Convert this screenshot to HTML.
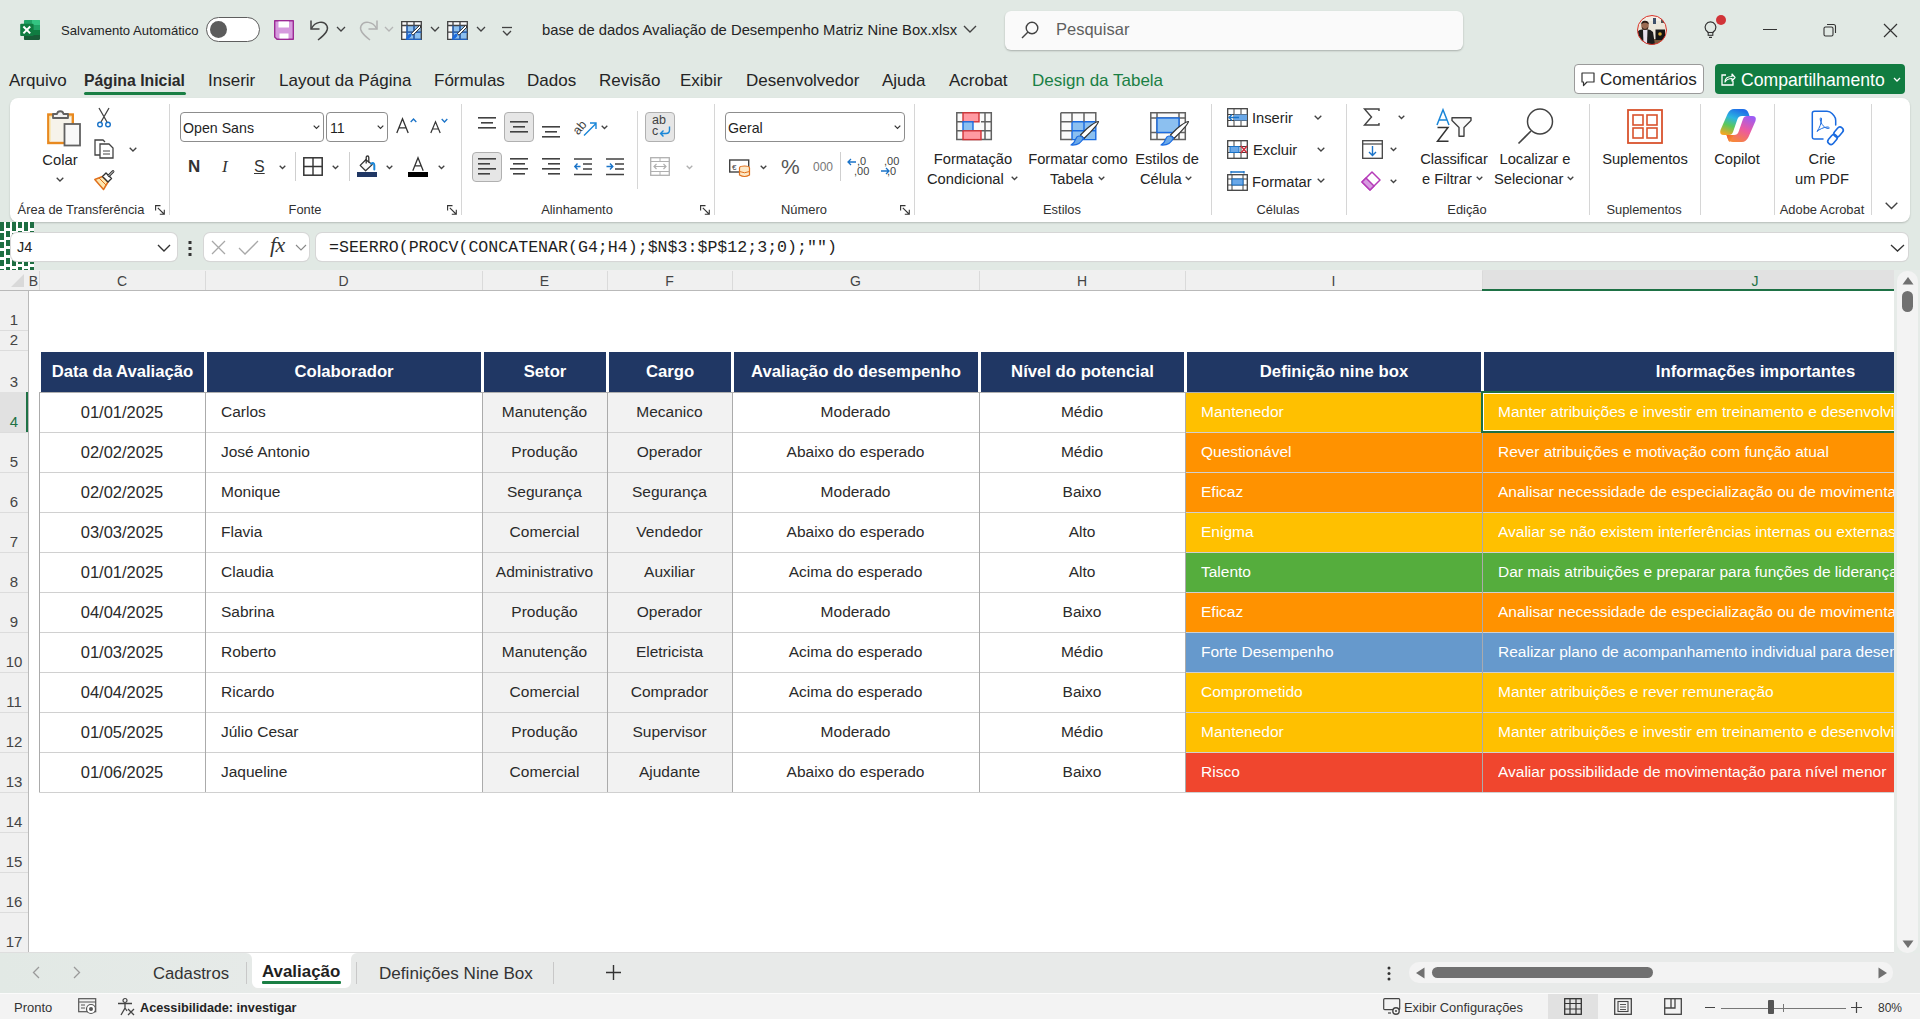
<!DOCTYPE html>
<html><head><meta charset="utf-8"><style>
html,body{margin:0;padding:0}
body{width:1920px;height:1019px;overflow:hidden;position:relative;background:#e1e9e4;font-family:"Liberation Sans",sans-serif;color:#242424}
.a{position:absolute;white-space:nowrap}
svg{position:absolute;overflow:visible}
.menu{position:absolute;white-space:nowrap;font-size:17px;top:71px;color:#242424}
.rib{position:absolute;left:10px;top:98px;width:1900px;height:124px;background:#fff;border-radius:8px;box-shadow:0 1px 2px rgba(0,0,0,.2)}
.sep{position:absolute;width:1px;background:#d4d4d4}
.gl{position:absolute;white-space:nowrap;font-size:13.5px;top:202px;color:#303030}
.rt{position:absolute;white-space:nowrap;font-size:15px;color:#242424}
.combo{position:absolute;background:#fff;border:1px solid #8d8d8d;border-radius:4px;box-sizing:border-box}
.sel{position:absolute;background:#e6e6e6;border:1px solid #b0b0b0;border-radius:4px;box-sizing:border-box}
.ch{position:absolute;white-space:nowrap;font-size:14px;color:#444;text-align:center;top:273px;line-height:16px}
.rh{position:absolute;white-space:nowrap;font-size:15px;color:#444;text-align:center;left:0;width:28px}
.c{position:absolute;white-space:nowrap;overflow:hidden;font-size:15.5px;line-height:40px;color:#2a2a2a;box-sizing:border-box}
.hd{position:absolute;white-space:nowrap;overflow:hidden;font-size:16.7px;font-weight:bold;line-height:40px;color:#fff;text-align:center;background:#203764;top:352px;height:40px}
</style></head><body>

<!-- excel icon -->
<svg style="left:20px;top:20px" width="20" height="20" viewBox="0 0 20 20">
 <defs><clipPath id="xlc"><rect x="3.8" y="0" width="16.2" height="20" rx="1.2"/></clipPath></defs>
 <g clip-path="url(#xlc)">
 <rect x="3.8" y="0" width="16.2" height="5" fill="#21a366"/>
 <rect x="12" y="0" width="8" height="5" fill="#33c481"/>
 <rect x="3.8" y="5" width="16.2" height="5" fill="#21a366"/>
 <rect x="3.8" y="10" width="16.2" height="5" fill="#107c41"/>
 <rect x="3.8" y="15" width="16.2" height="5" fill="#185c37"/>
 </g>
 <rect x="0.2" y="3.8" width="13.4" height="12.2" rx="1" fill="#107c41"/>
 <path d="M3.4 6.5 L10.2 13.4 M10.2 6.5 L3.4 13.4" stroke="#fff" stroke-width="2"/>
</svg>
<div class="a" style="left:61px;top:23px;font-size:13.1px;color:#242424">Salvamento Automático</div>
<div class="a" style="left:206px;top:17px;width:54px;height:25px;box-sizing:border-box;border:1px solid #5e5e5e;border-radius:13px;background:#fff"></div>
<div class="a" style="left:210px;top:21px;width:17px;height:17px;border-radius:50%;background:#5c5c5c"></div>
<!-- save -->
<svg style="left:274px;top:20px" width="20" height="20" viewBox="0 0 20 20">
 <path d="M0.7 0.7 H19.3 V19.3 H3 L0.7 17 Z" fill="#d69ade" stroke="#9c2a94" stroke-width="1.4" stroke-linejoin="round"/>
 <rect x="4.5" y="1.5" width="10.5" height="6" fill="#fff"/>
 <rect x="5.5" y="13.5" width="9" height="5" fill="#fff"/>
</svg>
<!-- undo -->
<svg style="left:309px;top:20px" width="22" height="21" viewBox="0 0 22 21">
 <path d="M2 0.5 V9 H10.5" fill="none" stroke="#424242" stroke-width="1.5"/>
 <path d="M2.5 8.5 C6 1.5 15 0 18 6 C20 10 17 14 9 20" fill="none" stroke="#424242" stroke-width="1.5"/>
</svg>
<svg style="left:336px;top:26px" width="10" height="6"><path d="M1 1 L5 5 L9 1" fill="none" stroke="#424242" stroke-width="1.3"/></svg>
<!-- redo -->
<svg style="left:357px;top:20px" width="22" height="21" viewBox="0 0 22 21">
 <path d="M20 0.5 V9 H11.5" fill="none" stroke="#b0b0b0" stroke-width="1.5"/>
 <path d="M19.5 8.5 C16 1.5 7 0 4 6 C2 10 5 14 13 20" fill="none" stroke="#b0b0b0" stroke-width="1.5"/>
</svg>
<svg style="left:384px;top:26px" width="10" height="6"><path d="M1 1 L5 5 L9 1" fill="none" stroke="#b5b5b5" stroke-width="1.3"/></svg>
<svg style="left:401px;top:21px" width="22" height="20" viewBox="0 0 22 20">
 <rect x="0.7" y="0.7" width="19.6" height="17.6" fill="#fafafa"/>
 <rect x="6" y="4.5" width="14.3" height="13.8" fill="#8cc0f0"/>
 <path d="M0.7 0.7 H20.3 V18.3 H0.7 Z M6 0.7 V18.3 M13 0.7 V18.3 M0.7 4.5 H20.3 M0.7 11.2 H20.3" fill="none" stroke="#424242" stroke-width="1.3"/>
 <path d="M6 4.5 V18.3 H20.3 M13 4.5 V18.3 M6 11.2 H20.3" fill="none" stroke="#1a6be0" stroke-width="1"/>
 <path d="M20 6 L12 14.2 L10.3 12.5 L18.5 4.5 Z" fill="#fff" stroke="#333" stroke-width="1"/>
 <path d="M10.8 13.6 C10 16.5 7.8 18.5 4.2 19 C5.5 17.5 6 15.5 7.5 13.6 C8.5 12.4 10.2 12.6 10.8 13.6 Z" fill="#1a6be0"/>
</svg>
<svg style="left:430px;top:26px" width="10" height="6"><path d="M1 1 L5 5 L9 1" fill="none" stroke="#424242" stroke-width="1.3"/></svg><svg style="left:447px;top:21px" width="22" height="20" viewBox="0 0 22 20">
 <rect x="0.7" y="0.7" width="19.6" height="17.6" fill="#fafafa"/>
 <rect x="6" y="4.5" width="14.3" height="13.8" fill="#8cc0f0"/>
 <path d="M0.7 0.7 H20.3 V18.3 H0.7 Z M6 0.7 V18.3 M13 0.7 V18.3 M0.7 4.5 H20.3 M0.7 11.2 H20.3" fill="none" stroke="#424242" stroke-width="1.3"/>
 <path d="M6 4.5 V18.3 H20.3 M13 4.5 V18.3 M6 11.2 H20.3" fill="none" stroke="#1a6be0" stroke-width="1"/>
 <path d="M20 6 L12 14.2 L10.3 12.5 L18.5 4.5 Z" fill="#fff" stroke="#333" stroke-width="1"/>
 <path d="M10.8 13.6 C10 16.5 7.8 18.5 4.2 19 C5.5 17.5 6 15.5 7.5 13.6 C8.5 12.4 10.2 12.6 10.8 13.6 Z" fill="#1a6be0"/>
</svg>
<svg style="left:476px;top:26px" width="10" height="6"><path d="M1 1 L5 5 L9 1" fill="none" stroke="#424242" stroke-width="1.3"/></svg>
<svg style="left:501px;top:26px" width="12" height="12" viewBox="0 0 12 12"><path d="M1 1.5 H11" stroke="#424242" stroke-width="1.3"/><path d="M2 5 L6 9 L10 5" fill="none" stroke="#424242" stroke-width="1.3"/></svg>
<div class="a" style="left:542px;top:22px;font-size:14.8px;color:#242424">base de dados Avaliação de Desempenho Matriz Nine Box.xlsx</div>
<svg style="left:963px;top:25px" width="14" height="8"><path d="M1 1 L7 7 L13 1" fill="none" stroke="#424242" stroke-width="1.4"/></svg>
<!-- search -->
<div class="a" style="left:1005px;top:11px;width:458px;height:39px;box-sizing:border-box;background:#fafafa;border-radius:6px;box-shadow:0 1px 2px rgba(0,0,0,.25)"></div>
<svg style="left:1021px;top:21px" width="18" height="18" viewBox="0 0 18 18"><circle cx="11" cy="7" r="5.8" fill="none" stroke="#424242" stroke-width="1.4"/><path d="M7 11 L1 17" stroke="#424242" stroke-width="1.5"/></svg>
<div class="a" style="left:1056px;top:20px;font-size:16.5px;color:#5f5f5f">Pesquisar</div>
<!-- avatar -->
<svg style="left:1637px;top:15px" width="30" height="30" viewBox="0 0 30 30">
 <defs><clipPath id="avc"><circle cx="15" cy="15" r="14.5"/></clipPath></defs>
 <g clip-path="url(#avc)">
  <rect width="30" height="30" fill="#ece6da"/>
  <rect x="0" y="0" width="30" height="6" fill="#f4efe6"/>
  <rect x="16" y="3" width="3" height="6" fill="#40506a"/>
  <rect x="24" y="3" width="3" height="5" fill="#555"/>
  <rect x="0" y="24" width="30" height="6" fill="#7a5a3e"/>
  <path d="M0 17 Q3 13.5 8 14.5 Q13 13.5 16 17 L18 30 H0 Z" fill="#1c1c1c"/>
  <path d="M6 15 L8.5 14.5 L10.5 15 L10 29 H6.5 Z" fill="#e6e0ec"/>
  <ellipse cx="8" cy="10.8" rx="3.8" ry="4.2" fill="#9a6a50"/>
  <path d="M4.2 9.5 Q4.5 5.5 8 5.8 Q11.8 5.8 11.8 9.5 Q10 7.5 8 7.8 Q6 7.5 4.2 9.5 Z" fill="#2a1c16"/>
  <path d="M5 12 Q8 16 11 12 L11 13.5 Q8 16.5 5 13.5 Z" fill="#3a2a22"/>
  <rect x="18.5" y="14.5" width="9.5" height="10.5" fill="#151515"/>
  <circle cx="23" cy="19" r="1.8" fill="#d4a83a"/>
 </g>
 <circle cx="15" cy="15" r="14.5" fill="none" stroke="#d9342b" stroke-width="1"/>
</svg>
<!-- lightbulb -->
<svg style="left:1703px;top:21px" width="16" height="18" viewBox="0 0 16 18"><path d="M5.2 11.5 L2.7 8.8 A5.4 5.4 0 1 1 12.3 8.8 L9.8 11.5 Z" fill="none" stroke="#333" stroke-width="1.2" stroke-linejoin="round"/><rect x="5.2" y="11.5" width="4.6" height="2.8" fill="none" stroke="#333" stroke-width="1.1"/><path d="M6 16.4 H9" stroke="#333" stroke-width="1.2"/></svg>
<div class="a" style="left:1716px;top:15px;width:10px;height:10px;border-radius:50%;background:#d13438"></div>
<!-- window controls -->
<div class="a" style="left:1763px;top:29px;width:14px;height:1px;background:#333"></div>
<svg style="left:1823px;top:23px" width="14" height="14" viewBox="0 0 14 14"><rect x="1" y="4" width="9" height="9" rx="1.5" fill="none" stroke="#333" stroke-width="1.1"/><path d="M4 1.5 H10.5 Q12.5 1.5 12.5 3.5 V10" fill="none" stroke="#333" stroke-width="1.1"/></svg>
<svg style="left:1883px;top:23px" width="15" height="15" viewBox="0 0 15 15"><path d="M1 1 L14 14 M14 1 L1 14" stroke="#333" stroke-width="1.2"/></svg>
<!-- MENU -->
<div class="menu" style="left:9px">Arquivo</div>
<div class="menu" style="left:84px;font-weight:bold;font-size:15.8px;top:72px;color:#2a2a2a">Página Inicial</div>
<div class="a" style="left:84px;top:92px;width:102px;height:3px;border-radius:2px;background:#1a7f44"></div>
<div class="menu" style="left:208px">Inserir</div>
<div class="menu" style="left:279px">Layout da Página</div>
<div class="menu" style="left:434px">Fórmulas</div>
<div class="menu" style="left:527px">Dados</div>
<div class="menu" style="left:599px">Revisão</div>
<div class="menu" style="left:680px">Exibir</div>
<div class="menu" style="left:746px">Desenvolvedor</div>
<div class="menu" style="left:882px">Ajuda</div>
<div class="menu" style="left:949px">Acrobat</div>
<div class="menu" style="left:1032px;color:#1a7f44">Design da Tabela</div>
<div class="a" style="left:1574px;top:64px;width:130px;height:30px;box-sizing:border-box;border:1px solid #9a9a9a;border-radius:4px;background:#fff"></div>
<svg style="left:1581px;top:72px" width="14" height="15" viewBox="0 0 14 15"><path d="M1 1 H13 V10 H6 L2.5 13.5 V10 H1 Z" fill="none" stroke="#333" stroke-width="1.2" stroke-linejoin="round"/></svg>
<div class="a" style="left:1600px;top:70px;font-size:17.1px;color:#242424">Comentários</div>
<div class="a" style="left:1715px;top:64px;width:190px;height:30px;border-radius:4px;background:#117c41"></div>
<svg style="left:1720px;top:71px" width="16" height="16" viewBox="0 0 16 16"><path d="M6 4 H2 V14 H13 V10" fill="none" stroke="#fff" stroke-width="1.3"/><path d="M5 11 C5 7 8 5.5 12 5.5 V3 L15 6.5 L12 10 V7.5 C9 7.5 6.5 8.5 5 11 Z" fill="none" stroke="#fff" stroke-width="1.2" stroke-linejoin="round"/></svg>
<div class="a" style="left:1741px;top:70px;font-size:17.6px;color:#fff">Compartilhamento</div>
<svg style="left:1893px;top:77px" width="8" height="5"><path d="M1 1 L4 4 L7 1" fill="none" stroke="#fff" stroke-width="1.3"/></svg>

<div class="rib"></div>
<div class="a" style="left:169px;top:104px;width:1px;height:111px;background:#d6d6d6"></div>
<div class="a" style="left:461px;top:104px;width:1px;height:111px;background:#d6d6d6"></div>
<div class="a" style="left:714px;top:104px;width:1px;height:111px;background:#d6d6d6"></div>
<div class="a" style="left:914px;top:104px;width:1px;height:111px;background:#d6d6d6"></div>
<div class="a" style="left:1211px;top:104px;width:1px;height:111px;background:#d6d6d6"></div>
<div class="a" style="left:1346px;top:104px;width:1px;height:111px;background:#d6d6d6"></div>
<div class="a" style="left:1589px;top:104px;width:1px;height:111px;background:#d6d6d6"></div>
<div class="a" style="left:1700px;top:104px;width:1px;height:111px;background:#d6d6d6"></div>
<div class="a" style="left:1774px;top:104px;width:1px;height:111px;background:#d6d6d6"></div>
<div class="a" style="left:1871px;top:104px;width:1px;height:111px;background:#d6d6d6"></div>
<div class="a" style="left:-19px;width:200px;text-align:center;top:201.8px;font-size:12.9px;line-height:15.5px;color:#303030">Área de Transferência</div>
<div class="a" style="left:205px;width:200px;text-align:center;top:201.8px;font-size:12.9px;line-height:15.5px;color:#303030">Fonte</div>
<div class="a" style="left:477px;width:200px;text-align:center;top:201.8px;font-size:12.9px;line-height:15.5px;color:#303030">Alinhamento</div>
<div class="a" style="left:704px;width:200px;text-align:center;top:201.8px;font-size:12.9px;line-height:15.5px;color:#303030">Número</div>
<div class="a" style="left:962px;width:200px;text-align:center;top:201.8px;font-size:12.9px;line-height:15.5px;color:#303030">Estilos</div>
<div class="a" style="left:1178px;width:200px;text-align:center;top:201.8px;font-size:12.9px;line-height:15.5px;color:#303030">Células</div>
<div class="a" style="left:1367px;width:200px;text-align:center;top:201.8px;font-size:12.9px;line-height:15.5px;color:#303030">Edição</div>
<div class="a" style="left:1544px;width:200px;text-align:center;top:201.8px;font-size:12.9px;line-height:15.5px;color:#303030">Suplementos</div>
<div class="a" style="left:1722px;width:200px;text-align:center;top:201.8px;font-size:12.9px;line-height:15.5px;color:#303030">Adobe Acrobat</div>
<svg style="left:155px;top:205px" width="10" height="10" viewBox="0 0 10 10"><path d="M0.6 5.5 V0.6 H5.5" fill="none" stroke="#333" stroke-width="1.1"/><path d="M2.8 2.8 L9 9 M9.3 4.8 V9.3 H4.8" fill="none" stroke="#333" stroke-width="1.1"/></svg>
<svg style="left:447px;top:205px" width="10" height="10" viewBox="0 0 10 10"><path d="M0.6 5.5 V0.6 H5.5" fill="none" stroke="#333" stroke-width="1.1"/><path d="M2.8 2.8 L9 9 M9.3 4.8 V9.3 H4.8" fill="none" stroke="#333" stroke-width="1.1"/></svg>
<svg style="left:700px;top:205px" width="10" height="10" viewBox="0 0 10 10"><path d="M0.6 5.5 V0.6 H5.5" fill="none" stroke="#333" stroke-width="1.1"/><path d="M2.8 2.8 L9 9 M9.3 4.8 V9.3 H4.8" fill="none" stroke="#333" stroke-width="1.1"/></svg>
<svg style="left:900px;top:205px" width="10" height="10" viewBox="0 0 10 10"><path d="M0.6 5.5 V0.6 H5.5" fill="none" stroke="#333" stroke-width="1.1"/><path d="M2.8 2.8 L9 9 M9.3 4.8 V9.3 H4.8" fill="none" stroke="#333" stroke-width="1.1"/></svg>
<svg style="left:46px;top:107px" width="36" height="40" viewBox="0 0 36 40">
 <rect x="2.3" y="7.5" width="24.5" height="28.5" fill="#f6f3ea" stroke="#e8891f" stroke-width="2.4"/>
 <path d="M4 34 V9.5 H25" fill="none" stroke="#fbe3a0" stroke-width="1.2"/>
 <path d="M7 11 V7 H11 A3.3 3.3 0 0 1 17.5 7 H22 V11 Z" fill="#f2f2f2" stroke="#616161" stroke-width="1.8" stroke-linejoin="round"/>
 <rect x="18.5" y="17" width="15.5" height="21.5" fill="#f8f8f8" stroke="#616161" stroke-width="1.8"/>
</svg>
<div class="a" style="left:-40px;width:200px;text-align:center;top:152.1px;font-size:14.8px;line-height:17.8px;color:#242424">Colar</div>
<svg style="left:56px;top:177.0px" width="8" height="5.0"><path d="M0.7 0.7 L4.0 4.0 L7.3 0.7" fill="none" stroke="#424242" stroke-width="1.3"/></svg>
<svg style="left:96px;top:107px" width="16" height="21" viewBox="0 0 16 21"><path d="M3 1 L11 15 M13 1 L5 15" stroke="#424242" stroke-width="1.3"/><circle cx="4" cy="17.5" r="2.3" fill="#fff" stroke="#1a73c8" stroke-width="1.4"/><circle cx="12" cy="17.5" r="2.3" fill="#fff" stroke="#1a73c8" stroke-width="1.4"/></svg>
<svg style="left:94px;top:139px" width="21" height="20" viewBox="0 0 21 20"><path d="M6 16 H1 V1 H9 L11 3" fill="none" stroke="#424242" stroke-width="1.3"/><path d="M6 5 H15 L19 9 V19 H6 Z" fill="#fff" stroke="#424242" stroke-width="1.3"/><path d="M9 12 H16 M9 15 H16" stroke="#424242" stroke-width="1"/></svg>
<svg style="left:129px;top:147.0px" width="8" height="5.0"><path d="M0.7 0.7 L4.0 4.0 L7.3 0.7" fill="none" stroke="#424242" stroke-width="1.3"/></svg>
<svg style="left:94px;top:170px" width="21" height="21" viewBox="0 0 21 21"><path d="M0.8 9.5 L8.5 6.5 L14 12 L9.5 19.5 Z" fill="#fde6b0" stroke="#e0701c" stroke-width="1.5" stroke-linejoin="round"/><path d="M5 8 L12 15" stroke="#e0701c" stroke-width="1"/><path d="M8.5 6.5 L12 3 L17.5 8.5 L14 12 Z" fill="#fff" stroke="#333" stroke-width="1.4" stroke-linejoin="round"/><path d="M15 5.5 L19 1.5" stroke="#333" stroke-width="2.8" stroke-linecap="round"/><path d="M15 5.5 L19 1.5" stroke="#fff" stroke-width="0.9" stroke-linecap="round"/></svg>
<div class="combo" style="left:180px;top:112px;width:144px;height:30px"></div>
<div class="a" style="left:183px;top:119.5px;font-size:14.2px;line-height:17.0px;color:#1f1f1f;">Open Sans</div>
<svg style="left:313px;top:125.25px" width="7" height="4.5"><path d="M0.7 0.7 L3.5 3.5 L6.3 0.7" fill="none" stroke="#333" stroke-width="1.2"/></svg>
<div class="combo" style="left:326px;top:112px;width:62px;height:30px"></div>
<div class="a" style="left:330px;top:119.5px;font-size:14.2px;line-height:17.0px;color:#1f1f1f;">11</div>
<svg style="left:377px;top:125.25px" width="7" height="4.5"><path d="M0.7 0.7 L3.5 3.5 L6.3 0.7" fill="none" stroke="#333" stroke-width="1.2"/></svg>
<svg style="left:396px;top:118px" width="14" height="16" viewBox="0 0 14 16"><path d="M0.8 15 L6.5 0.8 L12.2 15 M3 9.8 H10" fill="none" stroke="#333" stroke-width="1.3"/></svg>
<svg style="left:410px;top:118px" width="7" height="5"><path d="M0.7 4 L3.5 1 L6.3 4" fill="none" stroke="#1a73c8" stroke-width="1.3"/></svg>
<svg style="left:430px;top:121px" width="12" height="13" viewBox="0 0 12 13"><path d="M0.8 12 L5.5 0.8 L10.2 12 M2.6 8 H8.4" fill="none" stroke="#333" stroke-width="1.2"/></svg>
<svg style="left:441px;top:118px" width="7" height="5"><path d="M0.7 1 L3.5 4 L6.3 1" fill="none" stroke="#1a73c8" stroke-width="1.3"/></svg>
<div class="a" style="left:188px;top:157px;font-size:17px;line-height:20px;font-weight:bold;color:#333">N</div>
<div class="a" style="left:222px;top:157px;font-size:17px;line-height:20px;font-style:italic;font-family:'Liberation Serif';color:#333">I</div>
<div class="a" style="left:254px;top:157px;font-size:16px;line-height:20px;color:#333;text-decoration:underline">S</div>
<svg style="left:279px;top:165.25px" width="7" height="4.5"><path d="M0.7 0.7 L3.5 3.5 L6.3 0.7" fill="none" stroke="#424242" stroke-width="1.3"/></svg>
<div class="a" style="left:295px;top:152px;width:1px;height:29px;background:#cfcfcf"></div>
<svg style="left:303px;top:157px" width="20" height="19" viewBox="0 0 20 19"><rect x="0.8" y="0.8" width="18.4" height="17.4" fill="none" stroke="#333" stroke-width="1.5"/><path d="M10 1 V18 M1 9.5 H19" stroke="#333" stroke-width="1.4"/></svg>
<svg style="left:332px;top:165.25px" width="7" height="4.5"><path d="M0.7 0.7 L3.5 3.5 L6.3 0.7" fill="none" stroke="#424242" stroke-width="1.3"/></svg>
<div class="a" style="left:349px;top:152px;width:1px;height:29px;background:#cfcfcf"></div>
<svg style="left:357px;top:155px" width="21" height="23" viewBox="0 0 21 23"><path d="M3.2 10.4 L8.8 4.8 L15.2 9.6 L8.6 15.8 Z" fill="#fafafa" stroke="#333" stroke-width="1.3" stroke-linejoin="round"/><path d="M9.2 8.5 V2.6 Q9.2 1 10.5 1 Q11.8 1 11.8 2.6 V7.5" fill="none" stroke="#333" stroke-width="1.3"/><path d="M14.2 8.6 Q17 6.8 17.3 10 V14.5" fill="none" stroke="#1a86d8" stroke-width="2" stroke-linecap="round"/><rect x="0" y="17" width="20" height="5" fill="#203764"/></svg>
<svg style="left:386px;top:165.25px" width="7" height="4.5"><path d="M0.7 0.7 L3.5 3.5 L6.3 0.7" fill="none" stroke="#424242" stroke-width="1.3"/></svg>
<svg style="left:412px;top:157px" width="13" height="15" viewBox="0 0 13 15"><path d="M0.8 13.8 L6 0.8 L11.2 13.8 M2.8 8.8 H9.2" fill="none" stroke="#333" stroke-width="1.3"/></svg>
<div class="a" style="left:408px;top:172px;width:20px;height:5px;background:#000"></div>
<svg style="left:438px;top:165.25px" width="7" height="4.5"><path d="M0.7 0.7 L3.5 3.5 L6.3 0.7" fill="none" stroke="#424242" stroke-width="1.3"/></svg>
<svg style="left:478px;top:116.5px" width="20" height="17"><rect x="0" y="0" width="18" height="1.6" fill="#424242"/><rect x="3" y="5" width="12" height="1.6" fill="#424242"/><rect x="0" y="10" width="18" height="1.6" fill="#424242"/></svg>
<div class="sel" style="left:504px;top:112px;width:30px;height:30px"></div>
<svg style="left:510px;top:120.5px" width="20" height="17"><rect x="0" y="0" width="18" height="1.6" fill="#424242"/><rect x="3" y="5" width="12" height="1.6" fill="#424242"/><rect x="0" y="10" width="18" height="1.6" fill="#424242"/></svg>
<svg style="left:542px;top:125.5px" width="20" height="17"><rect x="0" y="0" width="18" height="1.6" fill="#424242"/><rect x="3" y="5" width="12" height="1.6" fill="#424242"/><rect x="0" y="10" width="18" height="1.6" fill="#424242"/></svg>
<svg style="left:571px;top:115px" width="26" height="22" viewBox="0 0 26 22"><text x="1" y="17" font-size="12.5" transform="rotate(-50 8 12)" fill="#424242" font-family="Liberation Sans">ab</text><path d="M13 20.5 L24.5 9 M19 8 H25 V14" fill="none" stroke="#1a86d8" stroke-width="1.4"/></svg>
<svg style="left:601px;top:125.25px" width="7" height="4.5"><path d="M0.7 0.7 L3.5 3.5 L6.3 0.7" fill="none" stroke="#424242" stroke-width="1.3"/></svg>
<div class="sel" style="left:472px;top:152px;width:30px;height:30px"></div>
<svg style="left:478px;top:158px" width="20" height="22"><rect x="0" y="0" width="18" height="1.6" fill="#424242"/><rect x="0" y="5" width="12" height="1.6" fill="#424242"/><rect x="0" y="10" width="18" height="1.6" fill="#424242"/><rect x="0" y="15" width="12" height="1.6" fill="#424242"/></svg>
<svg style="left:510px;top:158px" width="20" height="22"><rect x="0" y="0" width="18" height="1.6" fill="#424242"/><rect x="3" y="5" width="12" height="1.6" fill="#424242"/><rect x="0" y="10" width="18" height="1.6" fill="#424242"/><rect x="3" y="15" width="12" height="1.6" fill="#424242"/></svg>
<svg style="left:542px;top:158px" width="20" height="22"><rect x="0" y="0" width="18" height="1.6" fill="#424242"/><rect x="6" y="5" width="12" height="1.6" fill="#424242"/><rect x="0" y="10" width="18" height="1.6" fill="#424242"/><rect x="6" y="15" width="12" height="1.6" fill="#424242"/></svg>
<svg style="left:574px;top:158px" width="19" height="18" viewBox="0 0 19 18"><path d="M0 1 H18 M9 6 H18 M9 11 H18 M0 16.5 H18" stroke="#424242" stroke-width="1.5"/><path d="M6.5 8.5 H0.8 M3.5 5.5 L0.8 8.5 L3.5 11.5" fill="none" stroke="#1a73c8" stroke-width="1.4"/></svg>
<svg style="left:606px;top:158px" width="19" height="18" viewBox="0 0 19 18"><path d="M0 1 H18 M9 6 H18 M9 11 H18 M0 16.5 H18" stroke="#424242" stroke-width="1.5"/><path d="M0.5 8.5 H6.5 M4 5.5 L6.8 8.5 L4 11.5" fill="none" stroke="#1a73c8" stroke-width="1.4"/></svg>
<div class="a" style="left:637px;top:111px;width:1px;height:78px;background:#d6d6d6"></div>
<div class="sel" style="left:645px;top:112px;width:30px;height:30px"></div>
<div class="a" style="left:652px;top:115px;font-size:12.5px;line-height:10.5px;color:#424242">ab<br>c</div>
<svg style="left:659px;top:126px" width="12" height="12" viewBox="0 0 12 12"><path d="M10.5 0.5 V4 Q10.5 7.5 7 7.5 H1.5 M4.5 4.5 L1.5 7.5 L4.5 10.5" fill="none" stroke="#1a86d8" stroke-width="1.4"/></svg>
<svg style="left:650px;top:157px" width="20" height="19" viewBox="0 0 20 19"><rect x="0.7" y="0.7" width="18.6" height="17.6" fill="none" stroke="#b0b0b0" stroke-width="1.3"/><path d="M1 4.5 H19 M1 14.5 H19 M10 1 V4 M10 15 V18" stroke="#b0b0b0" stroke-width="1"/><path d="M4 9.5 H16 M6.5 7 L4 9.5 L6.5 12 M13.5 7 L16 9.5 L13.5 12" fill="none" stroke="#b0b0b0" stroke-width="1.2"/></svg>
<svg style="left:686px;top:165.25px" width="7" height="4.5"><path d="M0.7 0.7 L3.5 3.5 L6.3 0.7" fill="none" stroke="#b0b0b0" stroke-width="1.3"/></svg>
<div class="combo" style="left:725px;top:112px;width:180px;height:30px"></div>
<div class="a" style="left:728px;top:119.5px;font-size:14.2px;line-height:17.0px;color:#1f1f1f;">Geral</div>
<svg style="left:894px;top:125.25px" width="7" height="4.5"><path d="M0.7 0.7 L3.5 3.5 L6.3 0.7" fill="none" stroke="#333" stroke-width="1.2"/></svg>
<svg style="left:729px;top:159px" width="24" height="19" viewBox="0 0 24 19"><rect x="0.7" y="1" width="19" height="12" fill="none" stroke="#424242" stroke-width="1.4"/><text x="3" y="11" font-size="8" font-family="Liberation Sans" fill="#424242">€</text><ellipse cx="15.5" cy="9" rx="5" ry="2" fill="#fde9c8" stroke="#e0701c" stroke-width="1.2"/><path d="M10.5 9 V16 Q15.5 19 20.5 16 V9" fill="#fde9c8" stroke="#e0701c" stroke-width="1.2"/><path d="M10.5 12.5 Q15.5 15 20.5 12.5" fill="none" stroke="#e0701c" stroke-width="1"/></svg>
<svg style="left:760px;top:165.25px" width="7" height="4.5"><path d="M0.7 0.7 L3.5 3.5 L6.3 0.7" fill="none" stroke="#424242" stroke-width="1.3"/></svg>
<div class="a" style="left:781px;top:156px;font-size:21px;line-height:22px;color:#555">%</div>
<div class="a" style="left:813px;top:160px;font-size:12px;line-height:14px;color:#777">000</div>
<div class="a" style="left:840px;top:152px;width:1px;height:29px;background:#cfcfcf"></div>
<div class="a" style="left:854px;top:156px;font-size:11px;line-height:10px;color:#424242">&nbsp;,0<br>,00</div>
<svg style="left:847px;top:158px" width="10" height="8"><path d="M9 4 H1 M4 1 L1 4 L4 7" fill="none" stroke="#1a73c8" stroke-width="1.3"/></svg>
<div class="a" style="left:884px;top:156px;font-size:11px;line-height:10px;color:#424242">,00<br>&nbsp;,0</div>
<svg style="left:880px;top:167px" width="10" height="8"><path d="M1 4 H9 M6 1 L9 4 L6 7" fill="none" stroke="#1a73c8" stroke-width="1.3"/></svg>
<svg style="left:956px;top:112px" width="37" height="29" viewBox="0 0 37 29">
<rect x="0.8" y="0.8" width="34.5" height="26.8" fill="#fafafa"/>
<path d="M0.8 0.8 H35.3 V27.6 H0.8 Z M29 0.8 V27.6 M0.8 9.8 H7 M25 9.8 H35.3 M0.8 18.8 H7 M17 18.8 H35.3" fill="none" stroke="#616161" stroke-width="1.5"/>
<rect x="7" y="0.8" width="16" height="9" fill="#ff9aa2" stroke="#d13438" stroke-width="1.4"/>
<rect x="7" y="9.8" width="10" height="9" fill="#8cc0f0" stroke="#1a6be0" stroke-width="1.4"/>
<rect x="7" y="18.8" width="18" height="8.8" fill="#ff9aa2" stroke="#d13438" stroke-width="1.4"/>
</svg>
<div class="a" style="left:873px;width:200px;text-align:center;top:151.2px;font-size:14.7px;line-height:17.6px;color:#242424">Formatação</div>
<div class="a" style="left:927px;top:171.2px;font-size:14.7px;line-height:17.6px;color:#242424;">Condicional</div>
<svg style="left:1011px;top:176.25px" width="7" height="4.5"><path d="M0.7 0.7 L3.5 3.5 L6.3 0.7" fill="none" stroke="#424242" stroke-width="1.3"/></svg>
<svg style="left:1060px;top:112px" width="40" height="35" viewBox="0 0 40 35">
<rect x="0.8" y="0.8" width="35" height="26.8" fill="#fafafa"/>
<rect x="12" y="9.8" width="23.8" height="17.8" fill="#8cc0f0"/>
<path d="M12 9.8 H35.8 V27.6 H12 Z M24 9.8 V27.6 M12 18.8 H35.8" fill="none" stroke="#1a6be0" stroke-width="1.4"/>
<path d="M0.8 0.8 H35.8 V9.8 M0.8 0.8 V27.6 H12 M12 0.8 V9.8 M24 0.8 V9.8 M0.8 9.8 H12 M0.8 18.8 H12" fill="none" stroke="#616161" stroke-width="1.5"/>
<path d="M38.5 9.5 C38 12 31 20 26.5 24 L24 26.5 L20.5 23 L23 20.5 C27 16 35.5 9.5 38.5 9.5 Z" fill="#fff" stroke="#333" stroke-width="1.2" stroke-linejoin="round"/>
<path d="M23.5 26 C21.5 30.5 17 33.5 11 33 C13.5 31.5 15 29.5 16 26.5 C17 23.5 20.5 23 23.5 26 Z" fill="#6aa8e8" stroke="#1a6be0" stroke-width="1.2" stroke-linejoin="round"/>
</svg>
<div class="a" style="left:978px;width:200px;text-align:center;top:151.2px;font-size:14.7px;line-height:17.6px;color:#242424">Formatar como</div>
<div class="a" style="left:1050px;top:171.2px;font-size:14.7px;line-height:17.6px;color:#242424;">Tabela</div>
<svg style="left:1098px;top:176.25px" width="7" height="4.5"><path d="M0.7 0.7 L3.5 3.5 L6.3 0.7" fill="none" stroke="#424242" stroke-width="1.3"/></svg>
<svg style="left:1150px;top:112px" width="40" height="35" viewBox="0 0 40 35">
<rect x="0.8" y="0.8" width="34.5" height="26.8" fill="#fafafa"/>
<path d="M0.8 0.8 H35.3 V27.6 H0.8 Z M7 0.8 V27.6 M29 0.8 V27.6 M0.8 6 H35.3 M0.8 20.5 H35.3" fill="none" stroke="#616161" stroke-width="1.5"/>
<rect x="7" y="6" width="22" height="14.5" fill="#8cc0f0" stroke="#1a6be0" stroke-width="1.4"/>
<path d="M38.5 9.5 C38 12 31 20 26.5 24 L24 26.5 L20.5 23 L23 20.5 C27 16 35.5 9.5 38.5 9.5 Z" fill="#fff" stroke="#333" stroke-width="1.2" stroke-linejoin="round"/>
<path d="M23.5 26 C21.5 30.5 17 33.5 11 33 C13.5 31.5 15 29.5 16 26.5 C17 23.5 20.5 23 23.5 26 Z" fill="#6aa8e8" stroke="#1a6be0" stroke-width="1.2" stroke-linejoin="round"/>
</svg>
<div class="a" style="left:1067px;width:200px;text-align:center;top:151.2px;font-size:14.7px;line-height:17.6px;color:#242424">Estilos de</div>
<div class="a" style="left:1140px;top:171.2px;font-size:14.7px;line-height:17.6px;color:#242424;">Célula</div>
<svg style="left:1185px;top:176.25px" width="7" height="4.5"><path d="M0.7 0.7 L3.5 3.5 L6.3 0.7" fill="none" stroke="#424242" stroke-width="1.3"/></svg>
<svg style="left:1227px;top:108px" width="21" height="19" viewBox="0 0 21 19"><rect x="0.7" y="0.7" width="19.6" height="17.6" fill="#fff" stroke="#424242" stroke-width="1.3"/><path d="M7 1 V18 M14 1 V18 M1 6.5 H20 M1 12.5 H20" stroke="#424242" stroke-width="1"/><rect x="7" y="6.5" width="13" height="6" fill="#6aa8e8"/><path d="M12 9.5 H2 M5 6.5 L2 9.5 L5 12.5" fill="none" stroke="#1a73c8" stroke-width="1.4"/></svg>
<div class="a" style="left:1252px;top:110.2px;font-size:14.7px;line-height:17.6px;color:#242424;">Inserir</div>
<svg style="left:1314px;top:115.0px" width="8" height="5.0"><path d="M0.7 0.7 L4.0 4.0 L7.3 0.7" fill="none" stroke="#424242" stroke-width="1.3"/></svg>
<svg style="left:1227px;top:140px" width="21" height="19" viewBox="0 0 21 19"><rect x="0.7" y="0.7" width="19.6" height="17.6" fill="#fff" stroke="#424242" stroke-width="1.3"/><path d="M7 1 V18 M14 1 V18 M1 6.5 H20 M1 12.5 H20" stroke="#424242" stroke-width="1"/><rect x="3" y="6.5" width="9" height="6" fill="#6aa8e8" stroke="#1a73c8"/><path d="M14 6 L20 13 M20 6 L14 13" stroke="#d42b3a" stroke-width="1.4"/></svg>
<div class="a" style="left:1253px;top:141.7px;font-size:14.7px;line-height:17.6px;color:#242424;">Excluir</div>
<svg style="left:1317px;top:147.0px" width="8" height="5.0"><path d="M0.7 0.7 L4.0 4.0 L7.3 0.7" fill="none" stroke="#424242" stroke-width="1.3"/></svg>
<svg style="left:1227px;top:171px" width="21" height="20" viewBox="0 0 21 20"><path d="M4 1 H17 M4 0 V2.5 M17 0 V2.5" stroke="#1a73c8" stroke-width="1.3"/><rect x="0.7" y="3.7" width="19.6" height="15.6" fill="#fff" stroke="#424242" stroke-width="1.3"/><path d="M5 4 V19 M16 4 V19 M1 8 H20 M1 14 H20" stroke="#424242" stroke-width="1"/><rect x="5" y="8" width="11" height="6" fill="#6aa8e8" stroke="#1a73c8"/></svg>
<div class="a" style="left:1252px;top:173.7px;font-size:14.7px;line-height:17.6px;color:#242424;">Formatar</div>
<svg style="left:1317px;top:178.0px" width="8" height="5.0"><path d="M0.7 0.7 L4.0 4.0 L7.3 0.7" fill="none" stroke="#424242" stroke-width="1.3"/></svg>
<svg style="left:1363px;top:108px" width="18" height="18" viewBox="0 0 18 18"><path d="M16 3 V1 H1.5 L8.5 9 L1.5 17 H16 V15" fill="none" stroke="#424242" stroke-width="1.4" stroke-linejoin="miter"/></svg>
<svg style="left:1398px;top:115.25px" width="7" height="4.5"><path d="M0.7 0.7 L3.5 3.5 L6.3 0.7" fill="none" stroke="#424242" stroke-width="1.3"/></svg>
<svg style="left:1362px;top:140px" width="21" height="19" viewBox="0 0 21 19"><rect x="0.7" y="0.7" width="19.6" height="17.6" fill="#fff" stroke="#424242" stroke-width="1.3"/><path d="M1 4 H20" stroke="#424242" stroke-width="1.2"/><path d="M10.5 6 V15 M7 12 L10.5 15.5 L14 12" fill="none" stroke="#1a73c8" stroke-width="1.4"/></svg>
<svg style="left:1390px;top:147.25px" width="7" height="4.5"><path d="M0.7 0.7 L3.5 3.5 L6.3 0.7" fill="none" stroke="#424242" stroke-width="1.3"/></svg>
<svg style="left:1361px;top:170px" width="21" height="21" viewBox="0 0 21 21"><path d="M1 12 L11 2 L19 10 L9 20 Z" fill="#fff" stroke="#b53ab8" stroke-width="1.5" stroke-linejoin="round"/><path d="M1 12 L5 8 L13 16 L9 20 Z" fill="#d79ce0" stroke="#b53ab8" stroke-width="1.5" stroke-linejoin="round"/></svg>
<svg style="left:1390px;top:179.25px" width="7" height="4.5"><path d="M0.7 0.7 L3.5 3.5 L6.3 0.7" fill="none" stroke="#424242" stroke-width="1.3"/></svg>
<svg style="left:1436px;top:109px" width="14" height="34" viewBox="0 0 14 34"><path d="M1 16 L7 0.8 L13 16 M3 11 H11" fill="none" stroke="#1a86d8" stroke-width="1.5"/><path d="M1.5 18.5 H12 L1.5 32.3 H12.5" fill="none" stroke="#333" stroke-width="1.5"/></svg>
<svg style="left:1451px;top:117px" width="21" height="20" viewBox="0 0 21 20"><path d="M1 0.8 H20 V3.5 L13 10.5 V19.2 H8 V10.5 L1 3.5 Z" fill="#fafafa" stroke="#424242" stroke-width="1.4" stroke-linejoin="round"/></svg>
<div class="a" style="left:1354px;width:200px;text-align:center;top:151.2px;font-size:14.7px;line-height:17.6px;color:#242424">Classificar</div>
<div class="a" style="left:1422px;top:171.2px;font-size:14.7px;line-height:17.6px;color:#242424;">e Filtrar</div>
<svg style="left:1476px;top:176.25px" width="7" height="4.5"><path d="M0.7 0.7 L3.5 3.5 L6.3 0.7" fill="none" stroke="#424242" stroke-width="1.3"/></svg>
<svg style="left:1517px;top:108px" width="38" height="37" viewBox="0 0 38 37"><circle cx="23" cy="13.5" r="12.5" fill="none" stroke="#424242" stroke-width="1.5"/><path d="M14 23 L1.5 35.5" stroke="#424242" stroke-width="1.6"/></svg>
<div class="a" style="left:1435px;width:200px;text-align:center;top:151.2px;font-size:14.7px;line-height:17.6px;color:#242424">Localizar e</div>
<div class="a" style="left:1494px;top:171.2px;font-size:14.7px;line-height:17.6px;color:#242424;">Selecionar</div>
<svg style="left:1567px;top:176.25px" width="7" height="4.5"><path d="M0.7 0.7 L3.5 3.5 L6.3 0.7" fill="none" stroke="#424242" stroke-width="1.3"/></svg>
<svg style="left:1627px;top:109px" width="36" height="35" viewBox="0 0 36 35"><rect x="1" y="1" width="34" height="33" fill="none" stroke="#d9532d" stroke-width="1.8"/><rect x="6" y="6" width="10" height="10" fill="none" stroke="#d9532d" stroke-width="1.6"/><rect x="20" y="6" width="10" height="10" fill="none" stroke="#d9532d" stroke-width="1.6"/><rect x="6" y="19" width="10" height="10" fill="none" stroke="#d9532d" stroke-width="1.6"/><rect x="20" y="19" width="10" height="10" fill="none" stroke="#d9532d" stroke-width="1.6"/></svg>
<div class="a" style="left:1545px;width:200px;text-align:center;top:151.2px;font-size:14.7px;line-height:17.6px;color:#242424">Suplementos</div>
<svg style="left:1719px;top:108px" width="38" height="35" viewBox="0 0 38 35">
<defs><linearGradient id="cpa" x1="0.6" y1="0" x2="0.2" y2="1"><stop offset="0" stop-color="#1f6fe8"/><stop offset=".35" stop-color="#2cb5e0"/><stop offset=".65" stop-color="#5cc85a"/><stop offset="1" stop-color="#f5a623"/></linearGradient>
<linearGradient id="cpb" x1="0.8" y1="0" x2="0.3" y2="1"><stop offset="0" stop-color="#9b5cf6"/><stop offset=".5" stop-color="#ec5aa0"/><stop offset="1" stop-color="#f7873a"/></linearGradient>
<linearGradient id="cpc" x1="0" y1="0" x2="1" y2="1"><stop offset="0" stop-color="#f25a2a"/><stop offset="1" stop-color="#f7a23a"/></linearGradient></defs>
<path d="M15 1 H24 Q28 1 29.5 5 L30.5 8 H23 Q19.5 8 18.5 11 L14 24 Q13 27 10 27 H5 Q0 27 1.5 22 L8.5 6 Q11 1 15 1 Z" fill="url(#cpa)"/>
<path d="M23 34 H14 Q10 34 8.5 30 L7.5 27 H15 Q18.5 27 19.5 24 L24 11 Q25 8 28 8 H33 Q38 8 36.5 13 L29.5 29 Q27 34 23 34 Z" fill="url(#cpb)"/>
<path d="M7.5 27 H15 Q13 30 11 34 Q9 33 8.5 30 Z" fill="url(#cpc)"/>
</svg>
<div class="a" style="left:1637px;width:200px;text-align:center;top:151.2px;font-size:14.7px;line-height:17.6px;color:#242424">Copilot</div>
<svg style="left:1811px;top:110px" width="34" height="36" viewBox="0 0 34 36">
<path d="M12 29 H3.5 Q1.3 29 1.3 26.8 V3.3 Q1.3 1.2 3.5 1.2 H16 Q19 1.2 21 3.5 L23 5.8 Q24.7 7.8 24.7 10.5 V15" fill="none" stroke="#1a6be0" stroke-width="1.5" stroke-linecap="round"/>
<path d="M6 21.5 C8.5 18 10.5 13 10.5 9 C10.5 7 8.8 7.5 9.3 10 C10 14 13.5 18.5 17.5 18.5 C19 18.5 18.5 16.8 16 17 C12.5 17.3 8 19.5 6 21.5 Z" fill="none" stroke="#1a6be0" stroke-width="1"/>
<rect x="-5.5" y="-3.2" width="11" height="6.4" rx="3.2" transform="translate(27.5 22) rotate(-50)" fill="#fff" stroke="#1a6be0" stroke-width="1.6"/>
<rect x="-5.5" y="-3.2" width="11" height="6.4" rx="3.2" transform="translate(21.5 29.5) rotate(-50)" fill="none" stroke="#1a6be0" stroke-width="1.6"/>
</svg>
<div class="a" style="left:1722px;width:200px;text-align:center;top:151.2px;font-size:14.7px;line-height:17.6px;color:#242424">Crie</div>
<div class="a" style="left:1722px;width:200px;text-align:center;top:171.2px;font-size:14.7px;line-height:17.6px;color:#242424">um PDF</div>
<svg style="left:1885px;top:201.75px" width="13" height="7.5"><path d="M0.7 0.7 L6.5 6.5 L12.3 0.7" fill="none" stroke="#424242" stroke-width="1.4"/></svg>
<div class="a" style="left:0;top:270px;width:1894px;height:682px;background:#fff"></div>
<div class="a" style="left:0;top:270px;width:1894px;height:20px;background:#f0f0f0"></div>
<div class="a" style="left:0;top:290px;width:28px;height:662px;background:#f0f0f0"></div>
<svg style="left:0;top:270px" width="28" height="20"><path d="M24 4 L24 17 L11 17 Z" fill="#d9d9d9"/></svg>
<div class="a" style="left:1482px;top:270px;width:412px;height:20px;background:#e1e1e1"></div>
<div class="a" style="left:39px;top:271px;width:1px;height:19px;background:#dadada"></div>
<div class="a" style="left:205px;top:271px;width:1px;height:19px;background:#dadada"></div>
<div class="a" style="left:482px;top:271px;width:1px;height:19px;background:#dadada"></div>
<div class="a" style="left:607px;top:271px;width:1px;height:19px;background:#dadada"></div>
<div class="a" style="left:732px;top:271px;width:1px;height:19px;background:#dadada"></div>
<div class="a" style="left:979px;top:271px;width:1px;height:19px;background:#dadada"></div>
<div class="a" style="left:1185px;top:271px;width:1px;height:19px;background:#dadada"></div>
<div class="a" style="left:1482px;top:271px;width:1px;height:19px;background:#dadada"></div>
<div class="a" style="left:0;top:290px;width:1894px;height:1px;background:#b9b9b9"></div>
<div class="a" style="left:1482px;top:289px;width:412px;height:2px;background:#1e7145"></div>
<div class="a" style="left:28px;top:290px;width:1px;height:662px;background:#b9b9b9"></div>
<div class="ch" style="left:28px;width:11px;color:#444">B</div>
<div class="ch" style="left:39px;width:166px;color:#444">C</div>
<div class="ch" style="left:205px;width:277px;color:#444">D</div>
<div class="ch" style="left:482px;width:125px;color:#444">E</div>
<div class="ch" style="left:607px;width:125px;color:#444">F</div>
<div class="ch" style="left:732px;width:247px;color:#444">G</div>
<div class="ch" style="left:979px;width:206px;color:#444">H</div>
<div class="ch" style="left:1185px;width:297px;color:#444">I</div>
<div class="ch" style="left:1482px;width:546px;color:#1e7145">J</div>
<div class="a" style="left:0;top:330px;width:28px;height:1px;background:#dcdcdc"></div>
<div class="rh" style="top:311px;line-height:18px;color:#444">1</div>
<div class="a" style="left:0;top:350px;width:28px;height:1px;background:#dcdcdc"></div>
<div class="rh" style="top:331px;line-height:18px;color:#444">2</div>
<div class="a" style="left:0;top:392px;width:28px;height:1px;background:#dcdcdc"></div>
<div class="rh" style="top:373px;line-height:18px;color:#444">3</div>
<div class="a" style="left:0;top:432px;width:28px;height:1px;background:#dcdcdc"></div>
<div class="a" style="left:0;top:392px;width:28px;height:40px;background:#e1e1e1"></div>
<div class="a" style="left:26px;top:392px;width:2px;height:40px;background:#1e7145"></div>
<div class="rh" style="top:413px;line-height:18px;color:#1e7145">4</div>
<div class="a" style="left:0;top:472px;width:28px;height:1px;background:#dcdcdc"></div>
<div class="rh" style="top:453px;line-height:18px;color:#444">5</div>
<div class="a" style="left:0;top:512px;width:28px;height:1px;background:#dcdcdc"></div>
<div class="rh" style="top:493px;line-height:18px;color:#444">6</div>
<div class="a" style="left:0;top:552px;width:28px;height:1px;background:#dcdcdc"></div>
<div class="rh" style="top:533px;line-height:18px;color:#444">7</div>
<div class="a" style="left:0;top:592px;width:28px;height:1px;background:#dcdcdc"></div>
<div class="rh" style="top:573px;line-height:18px;color:#444">8</div>
<div class="a" style="left:0;top:632px;width:28px;height:1px;background:#dcdcdc"></div>
<div class="rh" style="top:613px;line-height:18px;color:#444">9</div>
<div class="a" style="left:0;top:672px;width:28px;height:1px;background:#dcdcdc"></div>
<div class="rh" style="top:653px;line-height:18px;color:#444">10</div>
<div class="a" style="left:0;top:712px;width:28px;height:1px;background:#dcdcdc"></div>
<div class="rh" style="top:693px;line-height:18px;color:#444">11</div>
<div class="a" style="left:0;top:752px;width:28px;height:1px;background:#dcdcdc"></div>
<div class="rh" style="top:733px;line-height:18px;color:#444">12</div>
<div class="a" style="left:0;top:792px;width:28px;height:1px;background:#dcdcdc"></div>
<div class="rh" style="top:773px;line-height:18px;color:#444">13</div>
<div class="a" style="left:0;top:832px;width:28px;height:1px;background:#dcdcdc"></div>
<div class="rh" style="top:813px;line-height:18px;color:#444">14</div>
<div class="a" style="left:0;top:872px;width:28px;height:1px;background:#dcdcdc"></div>
<div class="rh" style="top:853px;line-height:18px;color:#444">15</div>
<div class="a" style="left:0;top:912px;width:28px;height:1px;background:#dcdcdc"></div>
<div class="rh" style="top:893px;line-height:18px;color:#444">16</div>
<div class="a" style="left:0;top:952px;width:28px;height:1px;background:#dcdcdc"></div>
<div class="rh" style="top:933px;line-height:18px;color:#444">17</div>
<div class="hd" style="left:41px;width:163px">Data da Avaliação</div>
<div class="hd" style="left:207px;width:274px">Colaborador</div>
<div class="hd" style="left:484px;width:122px">Setor</div>
<div class="hd" style="left:609px;width:122px">Cargo</div>
<div class="hd" style="left:734px;width:244px">Avaliação do desempenho</div>
<div class="hd" style="left:981px;width:203px">Nível do potencial</div>
<div class="hd" style="left:1187px;width:294px">Definição nine box</div>
<div class="a" style="left:1484px;top:352px;width:410px;height:40px;overflow:hidden"><div class="hd" style="left:0;top:0;width:543px">Informações importantes</div></div>
<div class="a" style="left:482px;top:392px;width:125px;height:40px;background:#f2f2f2"></div>
<div class="a" style="left:607px;top:392px;width:125px;height:40px;background:#f2f2f2"></div>
<div class="a" style="left:1185px;top:392px;width:709px;height:40px;background:#ffc000"></div>
<div class="c" style="left:39px;top:392px;width:166px;height:40px;text-align:center;font-size:16.5px;">01/01/2025</div>
<div class="c" style="left:221px;top:392px;width:261px;height:40px;color:#2a2a2a">Carlos</div>
<div class="c" style="left:482px;top:392px;width:125px;height:40px;text-align:center;">Manutenção</div>
<div class="c" style="left:607px;top:392px;width:125px;height:40px;text-align:center;">Mecanico</div>
<div class="c" style="left:732px;top:392px;width:247px;height:40px;text-align:center;">Moderado</div>
<div class="c" style="left:979px;top:392px;width:206px;height:40px;text-align:center;">Médio</div>
<div class="c" style="left:1201px;top:392px;width:281px;height:40px;color:#fff">Mantenedor</div>
<div class="c" style="left:1498px;top:392px;width:396px;height:40px;color:#fff">Manter atribuições e investir em treinamento e desenvolvimento</div>
<div class="a" style="left:482px;top:432px;width:125px;height:40px;background:#f2f2f2"></div>
<div class="a" style="left:607px;top:432px;width:125px;height:40px;background:#f2f2f2"></div>
<div class="a" style="left:1185px;top:432px;width:709px;height:40px;background:#ff9200"></div>
<div class="c" style="left:39px;top:432px;width:166px;height:40px;text-align:center;font-size:16.5px;">02/02/2025</div>
<div class="c" style="left:221px;top:432px;width:261px;height:40px;color:#2a2a2a">José Antonio</div>
<div class="c" style="left:482px;top:432px;width:125px;height:40px;text-align:center;">Produção</div>
<div class="c" style="left:607px;top:432px;width:125px;height:40px;text-align:center;">Operador</div>
<div class="c" style="left:732px;top:432px;width:247px;height:40px;text-align:center;">Abaixo do esperado</div>
<div class="c" style="left:979px;top:432px;width:206px;height:40px;text-align:center;">Médio</div>
<div class="c" style="left:1201px;top:432px;width:281px;height:40px;color:#fff">Questionável</div>
<div class="c" style="left:1498px;top:432px;width:396px;height:40px;color:#fff">Rever atribuições e motivação com função atual</div>
<div class="a" style="left:482px;top:472px;width:125px;height:40px;background:#f2f2f2"></div>
<div class="a" style="left:607px;top:472px;width:125px;height:40px;background:#f2f2f2"></div>
<div class="a" style="left:1185px;top:472px;width:709px;height:40px;background:#ff9200"></div>
<div class="c" style="left:39px;top:472px;width:166px;height:40px;text-align:center;font-size:16.5px;">02/02/2025</div>
<div class="c" style="left:221px;top:472px;width:261px;height:40px;color:#2a2a2a">Monique</div>
<div class="c" style="left:482px;top:472px;width:125px;height:40px;text-align:center;">Segurança</div>
<div class="c" style="left:607px;top:472px;width:125px;height:40px;text-align:center;">Segurança</div>
<div class="c" style="left:732px;top:472px;width:247px;height:40px;text-align:center;">Moderado</div>
<div class="c" style="left:979px;top:472px;width:206px;height:40px;text-align:center;">Baixo</div>
<div class="c" style="left:1201px;top:472px;width:281px;height:40px;color:#fff">Eficaz</div>
<div class="c" style="left:1498px;top:472px;width:396px;height:40px;color:#fff">Analisar necessidade de especialização ou de movimentação</div>
<div class="a" style="left:482px;top:512px;width:125px;height:40px;background:#f2f2f2"></div>
<div class="a" style="left:607px;top:512px;width:125px;height:40px;background:#f2f2f2"></div>
<div class="a" style="left:1185px;top:512px;width:709px;height:40px;background:#ffc000"></div>
<div class="c" style="left:39px;top:512px;width:166px;height:40px;text-align:center;font-size:16.5px;">03/03/2025</div>
<div class="c" style="left:221px;top:512px;width:261px;height:40px;color:#2a2a2a">Flavia</div>
<div class="c" style="left:482px;top:512px;width:125px;height:40px;text-align:center;">Comercial</div>
<div class="c" style="left:607px;top:512px;width:125px;height:40px;text-align:center;">Vendedor</div>
<div class="c" style="left:732px;top:512px;width:247px;height:40px;text-align:center;">Abaixo do esperado</div>
<div class="c" style="left:979px;top:512px;width:206px;height:40px;text-align:center;">Alto</div>
<div class="c" style="left:1201px;top:512px;width:281px;height:40px;color:#fff">Enigma</div>
<div class="c" style="left:1498px;top:512px;width:396px;height:40px;color:#fff">Avaliar se não existem interferências internas ou externas</div>
<div class="a" style="left:482px;top:552px;width:125px;height:40px;background:#f2f2f2"></div>
<div class="a" style="left:607px;top:552px;width:125px;height:40px;background:#f2f2f2"></div>
<div class="a" style="left:1185px;top:552px;width:709px;height:40px;background:#55ad3d"></div>
<div class="c" style="left:39px;top:552px;width:166px;height:40px;text-align:center;font-size:16.5px;">01/01/2025</div>
<div class="c" style="left:221px;top:552px;width:261px;height:40px;color:#2a2a2a">Claudia</div>
<div class="c" style="left:482px;top:552px;width:125px;height:40px;text-align:center;">Administrativo</div>
<div class="c" style="left:607px;top:552px;width:125px;height:40px;text-align:center;">Auxiliar</div>
<div class="c" style="left:732px;top:552px;width:247px;height:40px;text-align:center;">Acima do esperado</div>
<div class="c" style="left:979px;top:552px;width:206px;height:40px;text-align:center;">Alto</div>
<div class="c" style="left:1201px;top:552px;width:281px;height:40px;color:#fff">Talento</div>
<div class="c" style="left:1498px;top:552px;width:396px;height:40px;color:#fff">Dar mais atribuições e preparar para funções de liderança</div>
<div class="a" style="left:482px;top:592px;width:125px;height:40px;background:#f2f2f2"></div>
<div class="a" style="left:607px;top:592px;width:125px;height:40px;background:#f2f2f2"></div>
<div class="a" style="left:1185px;top:592px;width:709px;height:40px;background:#ff9200"></div>
<div class="c" style="left:39px;top:592px;width:166px;height:40px;text-align:center;font-size:16.5px;">04/04/2025</div>
<div class="c" style="left:221px;top:592px;width:261px;height:40px;color:#2a2a2a">Sabrina</div>
<div class="c" style="left:482px;top:592px;width:125px;height:40px;text-align:center;">Produção</div>
<div class="c" style="left:607px;top:592px;width:125px;height:40px;text-align:center;">Operador</div>
<div class="c" style="left:732px;top:592px;width:247px;height:40px;text-align:center;">Moderado</div>
<div class="c" style="left:979px;top:592px;width:206px;height:40px;text-align:center;">Baixo</div>
<div class="c" style="left:1201px;top:592px;width:281px;height:40px;color:#fff">Eficaz</div>
<div class="c" style="left:1498px;top:592px;width:396px;height:40px;color:#fff">Analisar necessidade de especialização ou de movimentação</div>
<div class="a" style="left:482px;top:632px;width:125px;height:40px;background:#f2f2f2"></div>
<div class="a" style="left:607px;top:632px;width:125px;height:40px;background:#f2f2f2"></div>
<div class="a" style="left:1185px;top:632px;width:709px;height:40px;background:#6699cc"></div>
<div class="c" style="left:39px;top:632px;width:166px;height:40px;text-align:center;font-size:16.5px;">01/03/2025</div>
<div class="c" style="left:221px;top:632px;width:261px;height:40px;color:#2a2a2a">Roberto</div>
<div class="c" style="left:482px;top:632px;width:125px;height:40px;text-align:center;">Manutenção</div>
<div class="c" style="left:607px;top:632px;width:125px;height:40px;text-align:center;">Eletricista</div>
<div class="c" style="left:732px;top:632px;width:247px;height:40px;text-align:center;">Acima do esperado</div>
<div class="c" style="left:979px;top:632px;width:206px;height:40px;text-align:center;">Médio</div>
<div class="c" style="left:1201px;top:632px;width:281px;height:40px;color:#fff">Forte Desempenho</div>
<div class="c" style="left:1498px;top:632px;width:396px;height:40px;color:#fff">Realizar plano de acompanhamento individual para desenvolvimento</div>
<div class="a" style="left:482px;top:672px;width:125px;height:40px;background:#f2f2f2"></div>
<div class="a" style="left:607px;top:672px;width:125px;height:40px;background:#f2f2f2"></div>
<div class="a" style="left:1185px;top:672px;width:709px;height:40px;background:#ffc000"></div>
<div class="c" style="left:39px;top:672px;width:166px;height:40px;text-align:center;font-size:16.5px;">04/04/2025</div>
<div class="c" style="left:221px;top:672px;width:261px;height:40px;color:#2a2a2a">Ricardo</div>
<div class="c" style="left:482px;top:672px;width:125px;height:40px;text-align:center;">Comercial</div>
<div class="c" style="left:607px;top:672px;width:125px;height:40px;text-align:center;">Comprador</div>
<div class="c" style="left:732px;top:672px;width:247px;height:40px;text-align:center;">Acima do esperado</div>
<div class="c" style="left:979px;top:672px;width:206px;height:40px;text-align:center;">Baixo</div>
<div class="c" style="left:1201px;top:672px;width:281px;height:40px;color:#fff">Comprometido</div>
<div class="c" style="left:1498px;top:672px;width:396px;height:40px;color:#fff">Manter atribuições e rever remuneração</div>
<div class="a" style="left:482px;top:712px;width:125px;height:40px;background:#f2f2f2"></div>
<div class="a" style="left:607px;top:712px;width:125px;height:40px;background:#f2f2f2"></div>
<div class="a" style="left:1185px;top:712px;width:709px;height:40px;background:#ffc000"></div>
<div class="c" style="left:39px;top:712px;width:166px;height:40px;text-align:center;font-size:16.5px;">01/05/2025</div>
<div class="c" style="left:221px;top:712px;width:261px;height:40px;color:#2a2a2a">Júlio Cesar</div>
<div class="c" style="left:482px;top:712px;width:125px;height:40px;text-align:center;">Produção</div>
<div class="c" style="left:607px;top:712px;width:125px;height:40px;text-align:center;">Supervisor</div>
<div class="c" style="left:732px;top:712px;width:247px;height:40px;text-align:center;">Moderado</div>
<div class="c" style="left:979px;top:712px;width:206px;height:40px;text-align:center;">Médio</div>
<div class="c" style="left:1201px;top:712px;width:281px;height:40px;color:#fff">Mantenedor</div>
<div class="c" style="left:1498px;top:712px;width:396px;height:40px;color:#fff">Manter atribuições e investir em treinamento e desenvolvimento</div>
<div class="a" style="left:482px;top:752px;width:125px;height:40px;background:#f2f2f2"></div>
<div class="a" style="left:607px;top:752px;width:125px;height:40px;background:#f2f2f2"></div>
<div class="a" style="left:1185px;top:752px;width:709px;height:40px;background:#f0462e"></div>
<div class="c" style="left:39px;top:752px;width:166px;height:40px;text-align:center;font-size:16.5px;">01/06/2025</div>
<div class="c" style="left:221px;top:752px;width:261px;height:40px;color:#2a2a2a">Jaqueline</div>
<div class="c" style="left:482px;top:752px;width:125px;height:40px;text-align:center;">Comercial</div>
<div class="c" style="left:607px;top:752px;width:125px;height:40px;text-align:center;">Ajudante</div>
<div class="c" style="left:732px;top:752px;width:247px;height:40px;text-align:center;">Abaixo do esperado</div>
<div class="c" style="left:979px;top:752px;width:206px;height:40px;text-align:center;">Baixo</div>
<div class="c" style="left:1201px;top:752px;width:281px;height:40px;color:#fff">Risco</div>
<div class="c" style="left:1498px;top:752px;width:396px;height:40px;color:#fff">Avaliar possibilidade de movimentação para nível menor</div>
<div class="a" style="left:39px;top:432px;width:1855px;height:1px;background:#d0d0d0"></div>
<div class="a" style="left:39px;top:472px;width:1855px;height:1px;background:#d0d0d0"></div>
<div class="a" style="left:39px;top:512px;width:1855px;height:1px;background:#d0d0d0"></div>
<div class="a" style="left:39px;top:552px;width:1855px;height:1px;background:#d0d0d0"></div>
<div class="a" style="left:39px;top:592px;width:1855px;height:1px;background:#d0d0d0"></div>
<div class="a" style="left:39px;top:632px;width:1855px;height:1px;background:#d0d0d0"></div>
<div class="a" style="left:39px;top:672px;width:1855px;height:1px;background:#d0d0d0"></div>
<div class="a" style="left:39px;top:712px;width:1855px;height:1px;background:#d0d0d0"></div>
<div class="a" style="left:39px;top:752px;width:1855px;height:1px;background:#d0d0d0"></div>
<div class="a" style="left:39px;top:792px;width:1855px;height:1px;background:#d0d0d0"></div>
<div class="a" style="left:39px;top:392px;width:1px;height:400px;background:#ababab"></div>
<div class="a" style="left:205px;top:392px;width:1px;height:400px;background:#ababab"></div>
<div class="a" style="left:482px;top:392px;width:1px;height:400px;background:#ababab"></div>
<div class="a" style="left:607px;top:392px;width:1px;height:400px;background:#ababab"></div>
<div class="a" style="left:732px;top:392px;width:1px;height:400px;background:#ababab"></div>
<div class="a" style="left:979px;top:392px;width:1px;height:400px;background:#ababab"></div>
<div class="a" style="left:1185px;top:392px;width:1px;height:400px;background:#ababab"></div>
<div class="a" style="left:1482px;top:392px;width:1px;height:400px;background:#ababab"></div>
<div class="a" style="left:39px;top:392px;width:1855px;height:1px;background:#b0b0b0"></div>
<div class="a" style="left:1481px;top:391px;width:420px;height:42px;box-sizing:border-box;border:2px solid #1e6e42"></div>
<div class="a" style="left:1483px;top:393px;width:420px;height:38px;box-sizing:border-box;border:1px solid #fff"></div>
<div class="a" style="left:0;top:222px;width:34px;height:48px;background:#fff"></div>
<div class="a" style="left:0px;top:222px;width:4px;height:48px;background:repeating-linear-gradient(180deg,#1e6e42 0 6.5px,#fff 6.5px 9px);background-position:0 2px"></div>
<div class="a" style="left:6px;top:222px;width:4px;height:48px;background:repeating-linear-gradient(180deg,#1e6e42 0 6.5px,#fff 6.5px 9px);background-position:0 0px"></div>
<div class="a" style="left:12px;top:222px;width:4px;height:48px;background:repeating-linear-gradient(180deg,#1e6e42 0 6.5px,#fff 6.5px 9px);background-position:0 2px"></div>
<div class="a" style="left:18px;top:222px;width:4px;height:48px;background:repeating-linear-gradient(180deg,#1e6e42 0 6.5px,#fff 6.5px 9px);background-position:0 0px"></div>
<div class="a" style="left:24px;top:222px;width:4px;height:48px;background:repeating-linear-gradient(180deg,#1e6e42 0 6.5px,#fff 6.5px 9px);background-position:0 2px"></div>
<div class="a" style="left:30px;top:222px;width:4px;height:48px;background:repeating-linear-gradient(180deg,#1e6e42 0 6.5px,#fff 6.5px 9px);background-position:0 0px"></div>
<div class="a" style="left:11px;top:233px;width:166px;height:28px;box-sizing:border-box;background:#fff;border-radius:6px;box-shadow:0 0 0 1px #d6d6d6, 0 1px 1px rgba(0,0,0,.08)"></div>
<div class="a" style="left:17px;top:238px;font-size:14.5px;line-height:18px;color:#242424">J4</div>
<svg style="left:157px;top:244px" width="14" height="8"><path d="M1 1 L7 7 L13 1" fill="none" stroke="#333" stroke-width="1.4"/></svg>
<svg style="left:188px;top:241px" width="4" height="16"><rect x="0.5" y="0" width="3" height="3" fill="#333"/><rect x="0.5" y="6" width="3" height="3" fill="#333"/><rect x="0.5" y="12" width="3" height="3" fill="#333"/></svg>
<div class="a" style="left:204px;top:233px;width:105px;height:28px;box-sizing:border-box;background:#fff;border-radius:6px;box-shadow:0 0 0 1px #d6d6d6, 0 1px 1px rgba(0,0,0,.08)"></div>
<svg style="left:211px;top:240px" width="15" height="15"><path d="M1 1 L14 14 M14 1 L1 14" stroke="#a8a8a8" stroke-width="1.3"/></svg>
<svg style="left:238px;top:240px" width="21" height="15"><path d="M1 8 L7 14 L20 1" fill="none" stroke="#a8a8a8" stroke-width="1.3"/></svg>
<div class="a" style="left:270px;top:233px;font-size:22px;line-height:24px;font-style:italic;font-family:'Liberation Serif',serif;color:#333;letter-spacing:-0.5px">fx</div>
<svg style="left:295px;top:244px" width="12" height="7"><path d="M1 1 L6 6 L11 1" fill="none" stroke="#888" stroke-width="1.1"/></svg>
<div class="a" style="left:316px;top:233px;width:1592px;height:28px;box-sizing:border-box;background:#fff;border-radius:6px;box-shadow:0 0 0 1px #d6d6d6, 0 1px 1px rgba(0,0,0,.08)"></div>
<div class="a" style="left:329px;top:238px;font-family:'Liberation Mono',monospace;font-size:16.6px;line-height:20px;color:#1f1f1f">=SEERRO(PROCV(CONCATENAR(G4;H4);$N$3:$P$12;3;0);"")</div>
<svg style="left:1890px;top:244px" width="15" height="8"><path d="M1 1 L7.5 7 L14 1" fill="none" stroke="#333" stroke-width="1.3"/></svg>
<div class="a" style="left:1894px;top:270px;width:26px;height:683px;background:#e6ebe8"></div>
<div class="a" style="left:1897px;top:271px;width:21px;height:682px;border-radius:10px;background:#f3f3f3"></div>
<svg style="left:1902px;top:276px" width="12" height="9"><path d="M0.5 8.5 L6 1 L11.5 8.5 Z" fill="#707070"/></svg>
<div class="a" style="left:1902px;top:291px;width:11px;height:21px;border-radius:6px;background:#707070"></div>
<svg style="left:1902px;top:940px" width="12" height="9"><path d="M0.5 0.5 L6 8 L11.5 0.5 Z" fill="#707070"/></svg>
<div class="a" style="left:0;top:952px;width:1894px;height:1px;background:#dedede"></div>
<div class="a" style="left:240px;top:953px;width:120px;height:10px;background:#fff"></div>
<div class="a" style="left:0;top:953px;width:252px;height:40px;border-top-right-radius:6px;background:linear-gradient(90deg,#e2e9e5,#e6eae8)"></div>
<div class="a" style="left:351px;top:953px;width:1569px;height:40px;border-top-left-radius:6px;background:#e8eae9"></div>
<div class="a" style="left:252px;top:975px;width:99px;height:18px;background:#e7eae8"></div>
<svg style="left:32px;top:966px" width="8" height="13"><path d="M7 1 L1.5 6.5 L7 12" fill="none" stroke="#9a9a9a" stroke-width="1.3"/></svg>
<svg style="left:73px;top:966px" width="8" height="13"><path d="M1 1 L6.5 6.5 L1 12" fill="none" stroke="#9a9a9a" stroke-width="1.3"/></svg>
<div class="a" style="left:153px;top:964px;font-size:16.7px;line-height:20px;color:#333">Cadastros</div>
<div class="a" style="left:246px;top:962px;width:1px;height:22px;background:#c8c8c8"></div>
<div class="a" style="left:252px;top:953px;width:99px;height:35px;border-radius:0 0 6px 6px;background:#fff"></div>
<div class="a" style="left:262px;top:962px;font-size:16.9px;line-height:20px;font-weight:bold;color:#1f1f1f">Avaliação</div>
<div class="a" style="left:262px;top:981px;width:79px;height:3px;border-radius:1px;background:#1a7f44"></div>
<div class="a" style="left:356px;top:962px;width:1px;height:22px;background:#c8c8c8"></div>
<div class="a" style="left:379px;top:964px;font-size:17.1px;line-height:20px;color:#333">Definições Nine Box</div>
<div class="a" style="left:553px;top:962px;width:1px;height:22px;background:#c8c8c8"></div>
<svg style="left:606px;top:965px" width="15" height="15"><path d="M7.5 0 V15 M0 7.5 H15" stroke="#333" stroke-width="1.4"/></svg>
<svg style="left:1387px;top:966px" width="4" height="15"><circle cx="2" cy="2" r="1.5" fill="#333"/><circle cx="2" cy="7.5" r="1.5" fill="#333"/><circle cx="2" cy="13" r="1.5" fill="#333"/></svg>
<div class="a" style="left:1409px;top:962px;width:484px;height:21px;border-radius:10px;background:#f3f3f3"></div>
<svg style="left:1415px;top:967px" width="10" height="12"><path d="M9.5 0.5 L1 6 L9.5 11.5 Z" fill="#707070"/></svg>
<div class="a" style="left:1432px;top:967px;width:221px;height:11px;border-radius:6px;background:#707070"></div>
<svg style="left:1878px;top:967px" width="10" height="12"><path d="M0.5 0.5 L9 6 L0.5 11.5 Z" fill="#707070"/></svg>
<div class="a" style="left:0;top:993px;width:1920px;height:26px;background:#f3f3f3"></div>
<div class="a" style="left:0;top:993px;width:1920px;height:1px;background:#fbfbfb"></div>
<div class="a" style="left:14px;top:1000px;font-size:13px;line-height:16px;color:#333">Pronto</div>
<svg style="left:78px;top:998px" width="19" height="17" viewBox="0 0 19 17"><rect x="0.7" y="0.7" width="17" height="13" fill="none" stroke="#555" stroke-width="1.2"/><path d="M1 4 H18 M3 7 H7 M3 10 H7" stroke="#555" stroke-width="1"/><circle cx="13" cy="11" r="4.5" fill="#fff" stroke="#555" stroke-width="1.2"/><circle cx="13" cy="11" r="2" fill="#555"/></svg>
<svg style="left:117px;top:998px" width="19" height="18" viewBox="0 0 19 18"><circle cx="8" cy="2.5" r="2" fill="none" stroke="#444" stroke-width="1.2"/><path d="M1 5.5 H15 M8 5.5 V10 L4 17 M8 10 L10 13" fill="none" stroke="#444" stroke-width="1.3"/><path d="M11 11 L17 17 M17 11 L11 17" stroke="#444" stroke-width="1.3"/></svg>
<div class="a" style="left:140px;top:1000px;font-size:12.7px;line-height:16px;font-weight:bold;color:#242424">Acessibilidade: investigar</div>
<svg style="left:1383px;top:998px" width="19" height="18" viewBox="0 0 19 18"><rect x="0.7" y="0.7" width="16" height="11" rx="1" fill="none" stroke="#444" stroke-width="1.2"/><path d="M5 15 H8" stroke="#444" stroke-width="1.2"/><circle cx="13" cy="13" r="3.2" fill="#f3f3f3" stroke="#444" stroke-width="1.4"/><circle cx="13" cy="13" r="1" fill="#444"/></svg>
<div class="a" style="left:1404px;top:1000px;font-size:12.9px;line-height:16px;color:#333">Exibir Configurações</div>
<div class="a" style="left:1548px;top:994px;width:50px;height:25px;background:#e1e1e1"></div>
<svg style="left:1564px;top:998px" width="18" height="17" viewBox="0 0 18 17"><rect x="0.7" y="0.7" width="16.6" height="15.6" fill="none" stroke="#333" stroke-width="1.3"/><path d="M6 1 V16 M12 1 V16 M1 5.5 H17 M1 11 H17" stroke="#333" stroke-width="1.2"/></svg>
<svg style="left:1614px;top:998px" width="18" height="17" viewBox="0 0 18 17"><rect x="0.7" y="0.7" width="16.6" height="15.6" fill="none" stroke="#444" stroke-width="1.3"/><rect x="4" y="3.5" width="10" height="10" fill="none" stroke="#444" stroke-width="1.1"/><path d="M6 6.5 H12 M6 9 H12 M6 11.5 H12" stroke="#444" stroke-width="0.9"/></svg>
<svg style="left:1664px;top:998px" width="18" height="17" viewBox="0 0 18 17"><rect x="0.7" y="0.7" width="16.6" height="15.6" fill="none" stroke="#444" stroke-width="1.3"/><path d="M7 1 V10 H1 M7 10 H11 V1" fill="none" stroke="#444" stroke-width="1.3"/></svg>
<div class="a" style="left:1705px;top:1007px;width:10px;height:1px;background:#444"></div>
<div class="a" style="left:1721px;top:1008px;width:125px;height:1px;background:#777"></div>
<div class="a" style="left:1783px;top:1004px;width:1px;height:8px;background:#777"></div>
<div class="a" style="left:1768px;top:1000px;width:6px;height:14px;border-radius:1px;background:#555"></div>
<svg style="left:1851px;top:1002px" width="11" height="11"><path d="M5.5 0 V11 M0 5.5 H11" stroke="#444" stroke-width="1.2"/></svg>
<div class="a" style="left:1878px;top:1000px;font-size:12px;line-height:16px;color:#333">80%</div>
</body></html>
